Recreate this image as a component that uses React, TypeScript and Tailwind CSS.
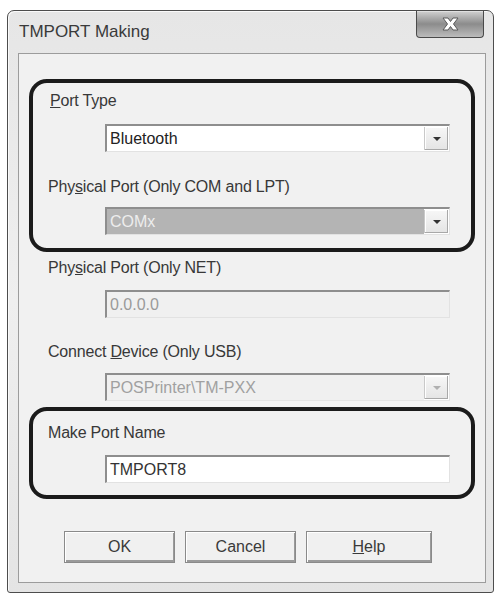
import React from "react";

const font = { fontFamily: '"Liberation Sans", Arial, sans-serif' };

function Arrow({ disabled }: { disabled?: boolean }) {
  return (
    <div className="flex h-full w-[24px] items-center justify-center border-l border-[#c9c9c9] bg-gradient-to-b from-[#f7f7f7] to-[#e4e4e4] shadow-[inset_-1px_-1px_0_#a8a8a8,inset_1px_1px_0_#ffffff]">
      <svg width="10" height="6" viewBox="0 0 10 6">
        <polygon points="1,1 9,1 5,5" fill={disabled ? "#b0b0b0" : "#333333"} />
      </svg>
    </div>
  );
}

function Field({
  children,
  bg = "bg-white",
  text = "text-[#222]",
  arrow,
  disabledArrow,
}: {
  children: React.ReactNode;
  bg?: string;
  text?: string;
  arrow?: boolean;
  disabledArrow?: boolean;
}) {
  return (
    <div className="ml-[72px] flex h-[28px] w-[345px] border-t-2 border-l-2 border-b border-r border-t-[#8e8e8e] border-l-[#8e8e8e] border-b-[#e2e2e2] border-r-[#e2e2e2]">
      <div className={`flex flex-1 items-center pl-[3px] text-[16px] ${bg} ${text}`}>{children}</div>
      {arrow && (
        <div className="h-full py-[1px] pr-[1px] bg-white">
          <Arrow disabled={disabledArrow} />
        </div>
      )}
    </div>
  );
}

function Label({ children, className = "" }: { children: React.ReactNode; className?: string }) {
  return <div className={`h-[20px] leading-[20px] text-[16px] text-[#383838] tracking-[-0.2px] ${className}`}>{children}</div>;
}

function Btn({ children, w }: { children: React.ReactNode; w: string }) {
  return (
    <div className={`${w} flex h-[32px] items-center justify-center border border-[#8a8a8a] bg-[#f0f0f0] text-[16px] text-[#3a3a3a] shadow-[inset_1px_1px_0_#ffffff,inset_-1px_-2px_0_#9a9a9a]`}>
      {children}
    </div>
  );
}

export default function App() {
  return (
    <div className="h-[603px] w-[500px] bg-white pt-[10px] pl-[7px]" style={font}>
      <div className="flex h-[583px] w-[487px] flex-col rounded-t-[7px] rounded-b-[3px] border border-[#4d4d4d] bg-gradient-to-b from-[#e6e6e6] via-[#efefef] to-[#e4e4e4] shadow-[inset_1px_1px_0_#fafafa]">
        {/* title bar */}
        <div className="flex h-[42px] items-start justify-between">
          <div className="pl-[11px] pt-[11px] text-[17px] leading-[20px] text-[#3a3a3a]">TMPORT Making</div>
          <div className="mr-[9px] flex h-[27px] w-[68px] items-center justify-center rounded-b-[4px] border border-t-0 border-[#4a4a4a] bg-gradient-to-b from-[#d2d2d2] via-[#8c8c8c] to-[#bcbcbc] shadow-[inset_0_1px_0_#e0e0e0]">
            <svg width="17" height="14" viewBox="0 0 17 14">
              <polygon
                points="1,1 6,1 8.5,4.5 11,1 16,1 11.5,7 16,13 11,13 8.5,9.5 6,13 1,13 5.5,7"
                fill="#ffffff"
                stroke="#5a5a5a"
                strokeWidth="1"
                strokeLinejoin="round"
              />
            </svg>
          </div>
        </div>
        {/* client area */}
        <div className="ml-[10px] mr-[7px] mb-[9px] flex flex-1 flex-col border border-[#9c9c9c] bg-[#f1f1f1] px-[10px] pt-[25px]">
          {/* box 1 */}
          <div className="rounded-[18px] border-4 border-[#1b1b1b] pt-[8px] pb-[13px]">
            <Label className="pl-[17px]">
              <span className="underline">P</span>ort Type
            </Label>
            <div className="mt-[13px]">
              <Field arrow>Bluetooth</Field>
            </div>
            <Label className="mt-[25px] pl-[15px]">
              Phy<span className="underline">s</span>ical Port (Only COM and LPT)
            </Label>
            <div className="mt-[10px]">
              <Field arrow bg="bg-[#b4b4b4]" text="text-[#ededed]">
                COMx
              </Field>
            </div>
          </div>
          {/* middle */}
          <div className="px-[4px]">
            <Label className="mt-[6px] pl-[15px]">
              Phy<span className="underline">s</span>ical Port (Only NET)
            </Label>
            <div className="mt-[12px]">
              <Field bg="bg-[#f0f0f0]" text="text-[#9a9a9a]">
                0.0.0.0
              </Field>
            </div>
            <Label className="mt-[24px] pl-[15px]">
              Connect <span className="underline">D</span>evice (Only USB)
            </Label>
            <div className="mt-[11px]">
              <Field arrow disabledArrow bg="bg-[#f0f0f0]" text="text-[#a0a0a0]">
                POSPrinter\TM-PXX
              </Field>
            </div>
          </div>
          {/* box 2 */}
          <div className="mt-[6px] rounded-[18px] border-4 border-[#1b1b1b] pt-[12px] pb-[12px]">
            <Label className="pl-[15px]">Make Port Name</Label>
            <div className="mt-[12px]">
              <Field text="text-[#333]">TMPORT8</Field>
            </div>
          </div>
          {/* buttons */}
          <div className="mt-[32px] flex gap-[10px] pl-[35px]">
            <Btn w="w-[111px]">OK</Btn>
            <Btn w="w-[111px]">Cancel</Btn>
            <Btn w="w-[126px]">
              <span>
                <span className="underline">H</span>elp
              </span>
            </Btn>
          </div>
        </div>
      </div>
    </div>
  );
}
